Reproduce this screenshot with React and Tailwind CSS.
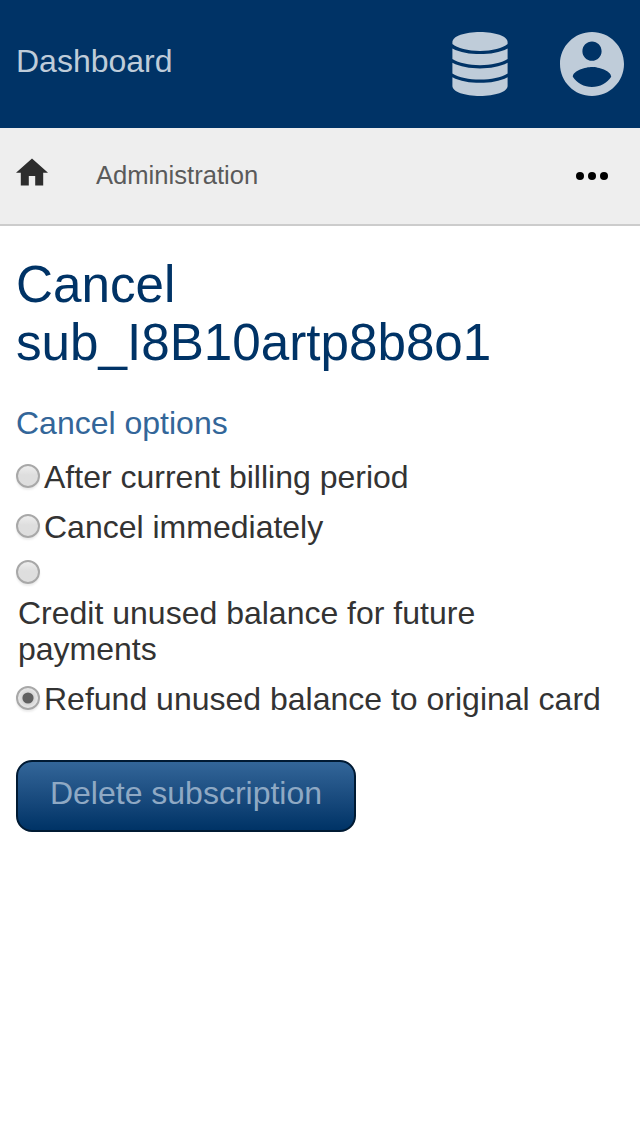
const radioStyle =
  'mt-[5px] flex size-6 shrink-0 items-center justify-center rounded-full border-2 border-[#a8a8a8] shadow-[0_2px_2px_rgba(0,0,0,0.08)]';

function Radio({ label, checked = false, className = '' }) {
  return (
    <label className={`flex h-9 ${className}`}>
      <span className={`${radioStyle} ${checked ? 'bg-[radial-gradient(circle,#d8d8d8_45%,#e8e8e8_70%)]' : 'bg-gradient-to-b from-[#eee] to-[#dedede] to-45%'}`}>
        {checked && (
          <svg className="size-3" viewBox="0 0 12 12" fill="#606060">
            <circle cx="6" cy="6" r="5.6" />
          </svg>
        )}
      </span>
      <span className="ml-1 whitespace-nowrap leading-9">{label}</span>
    </label>
  );
}

function DatabaseIcon({ className }) {
  return (
    <svg className={className} viewBox="0 0 56 64" fill="currentColor">
      <path d="M.4 10C.4 4.2 13 0 28 0s27.6 4.2 27.6 10v2C51 16 40 18.9 28 18.9S5 16 .4 12z" />
      <path d="M.4 16.4C8 20.4 18 22 28 22s20-1.6 27.6-5.6V27C49 31 39 33.2 28 33.2S7 31 .4 27z" />
      <path d="M.4 30.8C8 34.8 18 36.4 28 36.4s20-1.6 27.6-5.6v10.6C49 45.4 39 47.6 28 47.6S7 45.4.4 41.4z" />
      <path d="M.4 45.2C8 49.2 18 50.8 28 50.8s20-1.6 27.6-5.6V54C55.6 59.8 43 64 28 64S.4 59.8.4 54z" />
    </svg>
  );
}

function AccountIcon({ className }) {
  return (
    <svg className={className} viewBox="2 2 20 20" fill="currentColor">
      <path d="M12 2C6.48 2 2 6.48 2 12s4.48 10 10 10 10-4.48 10-10S17.52 2 12 2zm0 3c1.66 0 3 1.34 3 3s-1.34 3-3 3-3-1.34-3-3 1.34-3 3-3zm0 14.2c-2.5 0-4.71-1.28-6-3.22.03-1.99 4-3.08 6-3.08 1.99 0 5.97 1.09 6 3.08-1.29 1.94-3.5 3.22-6 3.22z" />
    </svg>
  );
}

export default function App() {
  return (
    <div className="min-h-[1136px] bg-white font-['Liberation_Sans',Arial,sans-serif] text-[32px] text-[#333]">
      <header className="flex h-32 items-start bg-[#003366] px-4 pt-8 text-[#bfccd9]">
        <span className="mt-[11px] leading-9">Dashboard</span>
        <DatabaseIcon className="ml-auto h-16 w-14" />
        <AccountIcon className="ml-[52px] size-16" />
      </header>
      <nav className="flex h-[98px] items-start border-b-2 border-[#ccc] bg-[#eee] pl-4 pr-8 pt-[30px] text-[25.6px] leading-9 text-[#5a5a5a]">
        <svg className="h-7 w-8 text-[#2d2d2d]" viewBox="2 2.75 20 17.5" fill="currentColor">
          <path d="M10 20v-6h4v6h5v-8h3L12 3 2 12h3v8z" />
        </svg>
        <span className="ml-12 -mt-px">Administration</span>
        <svg className="ml-auto mt-3.5 h-2 w-8 text-black" viewBox="0 0 32 8" fill="currentColor">
          <circle cx="4" cy="4" r="4" />
          <circle cx="16" cy="4" r="4" />
          <circle cx="28" cy="4" r="4" />
        </svg>
      </nav>
      <main className="px-4 pt-[30px]">
        <h1 className="text-[51.2px] leading-[58px] text-[#003366]">Cancel<br />sub_I8B10artp8b8o1</h1>
        <h2 className="mt-[33px] leading-9 text-[#336699]">Cancel options</h2>
        <Radio label="After current billing period" className="mt-[18px]" />
        <Radio label="Cancel immediately" className="mt-3.5" />
        <Radio label="" className="mt-2.5" />
        <p className="ml-0.5 mt-1 leading-9">Credit unused balance for future<br />payments</p>
        <Radio label="Refund unused balance to original card" checked className="mt-3.5" />
        <button className="mt-[43px] block h-18 w-[340px] rounded-2xl border-2 border-[#001a33] bg-gradient-to-b from-[#336699] to-[#003366] pb-1.5 text-[#8fa9c4]">
          Delete subscription
        </button>
      </main>
    </div>
  );
}
